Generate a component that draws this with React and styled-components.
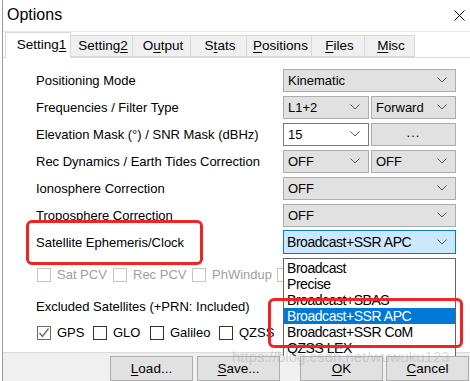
import React from 'react';
import styled, { createGlobalStyle } from 'styled-components';

const GlobalStyle = createGlobalStyle`
  html, body { margin: 0; padding: 0; background: #fff; overflow: hidden; }
  body { font-family: "Liberation Sans", Arial, sans-serif; color: #000; }
`;

/* window */
const Window = styled.div`
  position: relative;
  width: 467px;
  height: 381px;
  margin-left: 2px;
  border-left: 1px solid #9a9a9a;
  overflow: hidden;
  background: #fff;
  display: flex;
  flex-direction: column;
`;
const TitleBar = styled.div`
  height: 32px;
  box-sizing: border-box;
  border-bottom: 1px solid #e6e6e6;
  display: flex;
  align-items: center;
  justify-content: space-between;
  padding: 0 5px 0 4px;
`;
const Title = styled.div`
  font-size: 16px;
`;

/* tabs */
const TabStrip = styled.div`
  height: 25px;
  display: flex;
  align-items: flex-end;
  padding-left: 2px;
  position: relative;
  z-index: 1;
`;
const Tab = styled.div`
  box-sizing: border-box;
  width: ${p => p.w}px;
  height: ${p => (p.active ? 26 : 22)}px;
  margin-bottom: ${p => (p.active ? -1 : 0)}px;
  margin-left: ${p => (p.first ? 0 : -1)}px;
  background: ${p => (p.active ? '#fff' : '#f0f0f0')};
  border: 1px solid #d9d9d9;
  border-bottom: ${p => (p.active ? 'none' : '1px solid #d9d9d9')};
  display: flex;
  align-items: center;
  justify-content: center;
  padding: ${p => (p.active ? '0 0 2px 7px' : '0 0 0 3px')};
  font-size: 13.5px;
  white-space: nowrap;
`;
const Key = styled.span`
  text-decoration: underline;
  text-underline-offset: 2px;
`;

const Page = styled.div`
  height: 300px;
  box-sizing: border-box;
  border-top: 1px solid #d9d9d9;
  background: #fff;
  padding: 9px 0 0 33px;
`;
const Form = styled.div`
  display: grid;
  grid-template-columns: 247px 173px;
  grid-auto-rows: 27px;
  align-items: center;
`;
const Label = styled.div`
  font-size: 13px;
  white-space: nowrap;
`;
const Pair = styled.div`
  display: grid;
  grid-template-columns: 86px 85px;
  gap: 2px;
`;
const Combo = styled.div`
  box-sizing: border-box;
  height: ${p => (p.focused ? 24 : 23)}px;
  background: ${p => (p.focused ? '#cce8ff' : p.edit ? '#fff' : '#e1e1e1')};
  border: 1px solid ${p => (p.focused ? '#0078d7' : p.edit ? '#7a7a7a' : '#adadad')};
  display: flex;
  align-items: center;
  justify-content: space-between;
  padding: 0 8px 0 ${p => (p.focused ? 3 : 4)}px;
  font-size: ${p => (p.focused ? 14 : 13)}px;
  letter-spacing: ${p => (p.focused ? '-0.45px' : '0')};
  white-space: nowrap;
`;
const PushButton = styled.div`
  box-sizing: border-box;
  height: 23px;
  background: #e1e1e1;
  border: 1px solid #adadad;
  display: flex;
  align-items: center;
  justify-content: center;
  font-size: 13px;
  padding-bottom: 4px;
  letter-spacing: 1px;
`;

const Chevron = () => (
  <svg width="10" height="6" viewBox="0 0 10 6">
    <polyline points="0.5,0.5 5,5 9.5,0.5" fill="none" stroke="#5a5a5a" strokeWidth="1" />
  </svg>
);

/* checkboxes */
const CheckRow = styled.div`
  display: flex;
  height: 20px;
  align-items: center;
  margin-top: ${p => p.mt}px;
  padding-left: 1px;
  white-space: nowrap;
`;
const CheckItem = styled.div`
  flex: none;
  width: ${p => p.w}px;
  display: flex;
  align-items: center;
  gap: 6px;
  font-size: 13px;
  color: ${p => (p.disabled ? '#a0a0a0' : '#000')};
`;
const Box = styled.span`
  box-sizing: border-box;
  width: 14px;
  height: 14px;
  flex: none;
  border: 1px solid ${p => (p.disabled ? '#c4c4c4' : p.dim ? '#6a6a6a' : '#333')};
  background: #fff;
  display: flex;
  align-items: center;
  justify-content: center;
`;
const SectionLabel = styled.div`
  margin-top: 12px;
  height: 20px;
  display: flex;
  align-items: center;
  font-size: 13px;
`;

/* bottom buttons */
const BottomBar = styled.div`
  flex: 1;
  border-top: 1px solid #dadada;
  background: #f0f0f0;
  display: flex;
  align-items: flex-start;
  padding: 3px 0 0 107px;
`;
const DlgButton = styled.div`
  box-sizing: border-box;
  flex: none;
  width: 83px;
  height: 25px;
  margin-left: ${p => p.ml || 0}px;
  background: #e1e1e1;
  border: 1px solid #adadad;
  display: flex;
  align-items: center;
  justify-content: center;
  font-size: 13.5px;
`;

/* overlays */
const DropList = styled.div`
  position: absolute;
  left: 280px;
  top: 258px;
  width: 173px;
  box-sizing: border-box;
  border: 1px solid #646464;
  border-bottom: none;
  background: #fff;
  padding-top: 1px;
  z-index: 3;
`;
const DropItem = styled.div`
  height: 16px;
  line-height: 16px;
  padding-left: 3px;
  font-size: 14px;
  letter-spacing: -0.45px;
  white-space: nowrap;
  background: ${p => (p.selected ? '#0078d7' : 'transparent')};
  color: ${p => (p.selected ? '#fff' : '#000')};
`;
const Mark = styled.div`
  position: absolute;
  left: ${p => p.x}px;
  top: ${p => p.y}px;
  width: ${p => p.w}px;
  height: ${p => p.h}px;
  box-sizing: border-box;
  border: 3px solid #f02424;
  border-radius: 6px;
  z-index: 4;
`;
const Watermark = styled.div`
  position: absolute;
  left: 229px;
  top: 348px;
  font-size: 15px;
  color: rgba(170, 170, 170, 0.45);
  z-index: 5;
  white-space: nowrap;
`;

const tabs = [
  { w: 66, t: <>Setting<Key>1</Key></> },
  { w: 63, t: <>Setting<Key>2</Key></> },
  { w: 59, t: <>O<Key>u</Key>tput</> },
  { w: 57, t: <>S<Key>t</Key>ats</> },
  { w: 66, t: <><Key>P</Key>ositions</> },
  { w: 54, t: <><Key>F</Key>iles</> },
  { w: 51, t: <><Key>M</Key>isc</> },
];

const listItems = ['Broadcast', 'Precise', 'Broadcast+SBAS', 'Broadcast+SSR APC', 'Broadcast+SSR CoM', 'QZSS LEX'];

const Check = ({ checked, disabled, dim, w, children }) => (
  <CheckItem w={w} disabled={disabled}>
    <Box disabled={disabled} dim={dim}>
      {checked && (
        <svg width="12" height="12" viewBox="0 0 12 12">
          <polyline points="1.5,6 4.5,9.5 10.5,1.5" fill="none" stroke="#666" strokeWidth="1.3" />
        </svg>
      )}
    </Box>
    {children}
  </CheckItem>
);

export default function App() {
  return (
    <>
      <GlobalStyle />
      <Window>
        <TitleBar>
          <Title>Options</Title>
          <svg width="11" height="11" viewBox="0 0 11 11">
            <path d="M0.5 0.5 L10.5 10.5 M10.5 0.5 L0.5 10.5" stroke="#000" strokeWidth="1" />
          </svg>
        </TitleBar>

        <TabStrip>
          {tabs.map((tab, i) => (
            <Tab key={i} w={tab.w} active={i === 0} first={i === 0}>{tab.t}</Tab>
          ))}
        </TabStrip>

        <Page>
          <Form>
            <Label>Positioning Mode</Label>
            <Combo>Kinematic<Chevron /></Combo>

            <Label>Frequencies / Filter Type</Label>
            <Pair>
              <Combo>L1+2<Chevron /></Combo>
              <Combo>Forward<Chevron /></Combo>
            </Pair>

            <Label>Elevation Mask (°) / SNR Mask (dBHz)</Label>
            <Pair>
              <Combo edit>15<Chevron /></Combo>
              <PushButton>...</PushButton>
            </Pair>

            <Label>Rec Dynamics / Earth Tides Correction</Label>
            <Pair>
              <Combo>OFF<Chevron /></Combo>
              <Combo>OFF<Chevron /></Combo>
            </Pair>

            <Label>Ionosphere Correction</Label>
            <Combo>OFF<Chevron /></Combo>

            <Label>Troposphere Correction</Label>
            <Combo>OFF<Chevron /></Combo>

            <Label>Satellite Ephemeris/Clock</Label>
            <Combo focused>Broadcast+SSR APC<Chevron /></Combo>
          </Form>

          <CheckRow mt={9}>
            <Check disabled w={76}>Sat PCV</Check>
            <Check disabled w={79}>Rec PCV</Check>
            <Check disabled w={85}>PhWindup</Check>
            <Check disabled w={20} />
          </CheckRow>

          <SectionLabel>Excluded Satellites (+PRN: Included)</SectionLabel>

          <CheckRow mt={6}>
            <Check checked dim w={56}>GPS</Check>
            <Check w={57}>GLO</Check>
            <Check w={69}>Galileo</Check>
            <Check w={70}>QZSS</Check>
          </CheckRow>
        </Page>

        <BottomBar>
          <DlgButton><Key>L</Key>oad...</DlgButton>
          <DlgButton ml={4}><Key>S</Key>ave...</DlgButton>
          <DlgButton ml={20}><Key>O</Key>K</DlgButton>
          <DlgButton ml={3}><Key>C</Key>ancel</DlgButton>
        </BottomBar>

        <DropList>
          {listItems.map(item => (
            <DropItem key={item} selected={item === 'Broadcast+SSR APC'}>{item}</DropItem>
          ))}
        </DropList>

        <Mark x={23} y={220} w={177} h={45} />
        <Mark x={265} y={298} w={195} h={50} />
        <Watermark>https://blog.csdn.net/wuwuku123</Watermark>
      </Window>
    </>
  );
}
